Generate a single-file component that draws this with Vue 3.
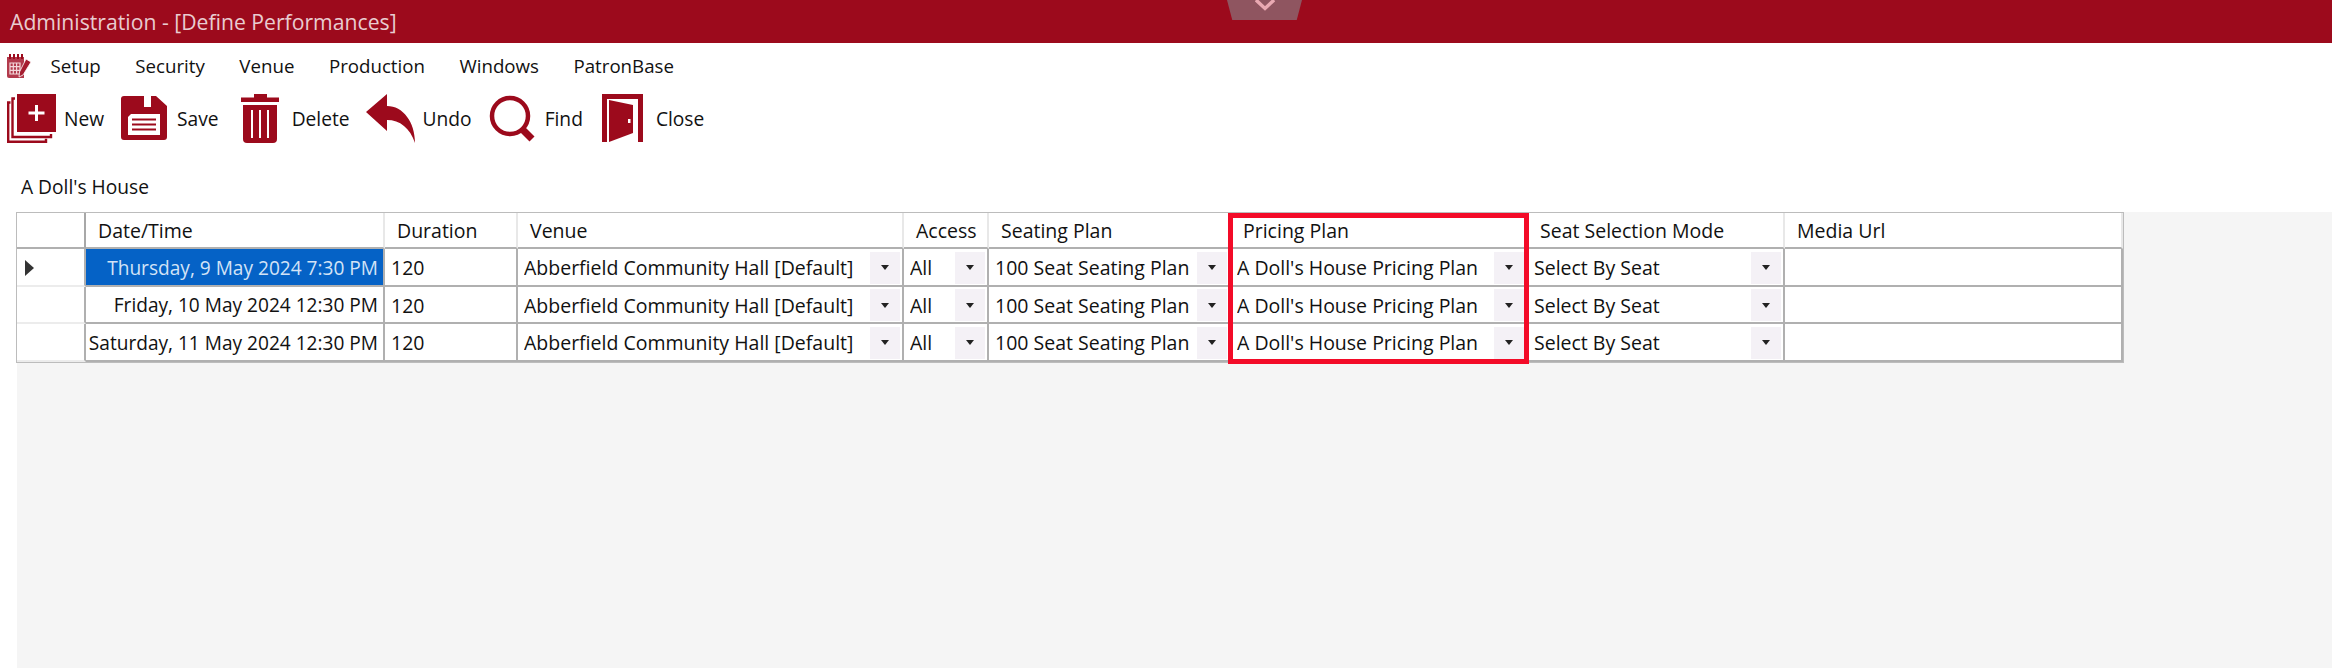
<template>
  <div class="window">
    <header class="titlebar">
      <span class="title">Administration - [Define Performances]</span>
      <div class="notch">
        <svg width="20" height="12" viewBox="0 0 20 12"><path d="M1 0 L10 8.5 L19 0" fill="none" stroke="#e9a9b2" stroke-width="3.4" /></svg>
      </div>
    </header>

    <nav class="menubar">
      <svg class="menu-icon" width="26" height="26" viewBox="0 0 26 26">
        <path d="M1 4h17v21H3a2 2 0 0 1-2-2z" fill="#b23a4c" />
        <path d="M4 1v5M8 1v5M12 1v5M16 1v5" stroke="#9c0a1c" stroke-width="2" />
        <path d="M4 10h10v11H4z M7.300 10v11 M10.600 10v11 M4 13.600h10 M4 17.300h10" fill="none" stroke="#f3d7da" stroke-width="1.2" />
        <path d="M20 6l5 3-8 13-4 2 .5-5z" fill="#a51d30" stroke="#fff" stroke-width=".8" />
      </svg>
      <span v-for="item in menuItems" :key="item" class="menu-item">{{ item }}</span>
    </nav>

    <div class="toolbar">
      <div class="tool">
        <svg class="tool-icon" viewBox="0 0 49 52">
          <path d="M10 2h39v38H10z" fill="#9c0a1c" />
          <path d="M8 6.500H5.500V45H44v-3" fill="none" stroke="#9c0a1c" stroke-width="2.4" />
          <path d="M3.500 10.500H1.200V49.800H39v-3" fill="none" stroke="#9c0a1c" stroke-width="2.4" />
          <path d="M28 13h3v6.500h6.500v3H31V29h-3v-6.500h-6.500v-3H28z" fill="#fff" />
        </svg>
        <span>New</span>
      </div>
      <div class="tool">
        <svg class="tool-icon" viewBox="0 0 49 52">
          <path d="M4 4h20v11h7V4h5l11 10v31a3 3 0 0 1-3 3H4a3 3 0 0 1-3-3V7a3 3 0 0 1 3-3z" fill="#9c0a1c" />
          <path d="M11 22h29v21H8V25z" fill="#fff" />
          <path d="M12 27.500h24M12 32.500h24M12 37.500h24" stroke="#9c0a1c" stroke-width="2" />
        </svg>
        <span>Save</span>
      </div>
      <div class="tool">
        <svg class="tool-icon" viewBox="0 0 49 52">
          <path d="M19 2h13v3.500h12V10H6V5.500h13z" fill="#9c0a1c" />
          <path d="M8 13h34v34a4 4 0 0 1-4 4H12a4 4 0 0 1-4-4z" fill="#9c0a1c" />
          <path d="M17 18v28M25 18v28M33 18v28" stroke="#fff" stroke-width="2" />
        </svg>
        <span>Delete</span>
      </div>
      <div class="tool">
        <svg class="tool-icon" viewBox="0 0 49 52">
          <path d="M0 20L21 2V14C37 14 49 30 49 51C44 36 34 28 21 28V39Z" fill="#9c0a1c" />
        </svg>
        <span>Undo</span>
      </div>
      <div class="tool">
        <svg class="tool-icon" viewBox="0 0 49 52">
          <circle cx="22" cy="24" r="18" fill="none" stroke="#9c0a1c" stroke-width="4.5" />
          <path d="M34 37L44 47" stroke="#9c0a1c" stroke-width="7" />
        </svg>
        <span>Find</span>
      </div>
      <div class="tool">
        <svg class="tool-icon" viewBox="0 0 49 52">
          <path d="M3 2H44V50H39V7H8V50H3Z" fill="#9c0a1c" />
          <path d="M10 8L34 13V41L10 50Z" fill="#9c0a1c" />
          <path d="M29 27h2.500v4H29z" fill="#fff" />
        </svg>
        <span>Close</span>
      </div>
    </div>

    <div class="show-name">A Doll's House</div>

    <main class="content">
      <div class="grid-wrap">
        <div class="grid">
          <div class="head corner"></div>
          <div v-for="col in columns" :key="col" class="head">{{ col }}</div>

          <template v-for="(row, i) in rows" :key="row">
            <div class="cell row-head">
              <span v-if="i === 0" class="pointer"></span>
            </div>
            <div class="cell date" :class="{ selected: i === 0 }">{{ row }}</div>
            <div class="cell">120</div>
            <div v-for="value in dropdowns" :key="value" class="cell combo">
              <span class="combo-text">{{ value }}</span>
              <span class="combo-btn"><i></i></span>
            </div>
            <div class="cell"></div>
          </template>
        </div>
        <div class="highlight"></div>
      </div>
    </main>
  </div>
</template>

<script setup>
const menuItems = ['Setup', 'Security', 'Venue', 'Production', 'Windows', 'PatronBase']

const columns = ['Date/Time', 'Duration', 'Venue', 'Access', 'Seating Plan', 'Pricing Plan', 'Seat Selection Mode', 'Media Url']

const rows = [
  'Thursday, 9 May 2024 7:30 PM',
  'Friday, 10 May 2024 12:30 PM',
  'Saturday, 11 May 2024 12:30 PM'
]

const dropdowns = [
  'Abberfield Community Hall [Default]',
  'All',
  '100 Seat Seating Plan',
  "A Doll's House Pricing Plan",
  'Select By Seat'
]
</script>

<style>
html, body {
  background: #fff;
}
</style>

<style scoped>
.window {
  width: 2332px;
  height: 668px;
  display: flex;
  flex-direction: column;
  overflow: hidden;
  background: #fff;
  color: #111;
  font-family: "Open Sans", "Noto Sans", sans-serif;
  font-size: 19.2px;
}

.titlebar {
  position: relative;
  height: 43px;
  flex: none;
  display: flex;
  align-items: center;
  padding-left: 10px;
  background: #9c0a1c;
}

.title {
  color: #e9ccd0;
  font-size: 21.2px;
}

.notch {
  position: absolute;
  left: 1227px;
  top: 0;
  width: 75px;
  height: 20px;
  display: flex;
  justify-content: center;
  background: #8f5560;
  clip-path: polygon(0 0, 100% 0, 93% 100%, 7% 100%);
}

.menubar {
  height: 46px;
  flex: none;
  display: flex;
  align-items: center;
  gap: 34.5px;
  padding-left: 6px;
  font-size: 18.7px;
}

.menu-icon {
  margin-right: -16px;
}

.menu-item {
  line-height: 1;
}

.toolbar {
  height: 58px;
  flex: none;
  display: flex;
  align-items: center;
  gap: 16px;
  padding-left: 7px;
}

.tool {
  display: flex;
  align-items: center;
  gap: 8px;
}

.tool-icon {
  width: 49px;
  height: 52px;
}

.show-name {
  height: 65px;
  flex: none;
  padding: 28px 0 0 21px;
  box-sizing: border-box;
  line-height: 24px;
}

.content {
  flex: 1;
  margin-left: 17px;
  background: #f5f5f5;
}

.grid-wrap {
  position: relative;
  width: 2106px;
  padding-top: 1px;
}

.grid {
  display: grid;
  grid-template-columns: 69px 299px 133px 386px 85px 242px 297px 257px 338px;
  grid-template-rows: 36px repeat(3, 37.5px);
  background: #fff;
  box-shadow: 0 0 0 1px #bcbcbc;
  font-size: 19.5px;
}

.head {
  display: flex;
  align-items: center;
  padding-left: 12px;
  border-right: 2px solid #e8e8e8;
  border-bottom: 2px solid #b0b0b0;
  white-space: nowrap;
}

.corner {
  padding: 0;
  border-right-color: #a8a8a8;
}

.head:last-of-type {
  border-right: none;
}

.cell {
  display: flex;
  align-items: center;
  min-width: 0;
  padding: 2px 0 0 6px;
  border-right: 2px solid #b0b0b0;
  border-bottom: 2px solid #b0b0b0;
  white-space: nowrap;
}

.row-head {
  padding-left: 8px;
  border-bottom-color: #ececec;
}

.pointer {
  width: 0;
  height: 0;
  border-style: solid;
  border-width: 8px 0 8px 9px;
  border-color: transparent transparent transparent #333;
}

.date {
  justify-content: flex-end;
  padding: 2px 5px 0 0;
  font-size: 19.1px;
}

.selected {
  background: #0562c6;
  color: #d3e3f6;
}

.combo {
  justify-content: space-between;
  padding-right: 2px;
}

.combo-text {
  overflow: hidden;
}

.combo-btn {
  width: 30px;
  height: 32px;
  flex: none;
  display: flex;
  align-items: center;
  justify-content: center;
  background: #f4f1f6;
}

.combo-btn i {
  width: 0;
  height: 0;
  border-style: solid;
  border-width: 5px 4px 0 4px;
  border-color: #222 transparent transparent transparent;
}

.highlight {
  position: absolute;
  left: 1211px;
  top: 1px;
  width: 301px;
  height: 151px;
  box-sizing: border-box;
  border: 5px solid #f30b28;
  pointer-events: none;
}
</style>
